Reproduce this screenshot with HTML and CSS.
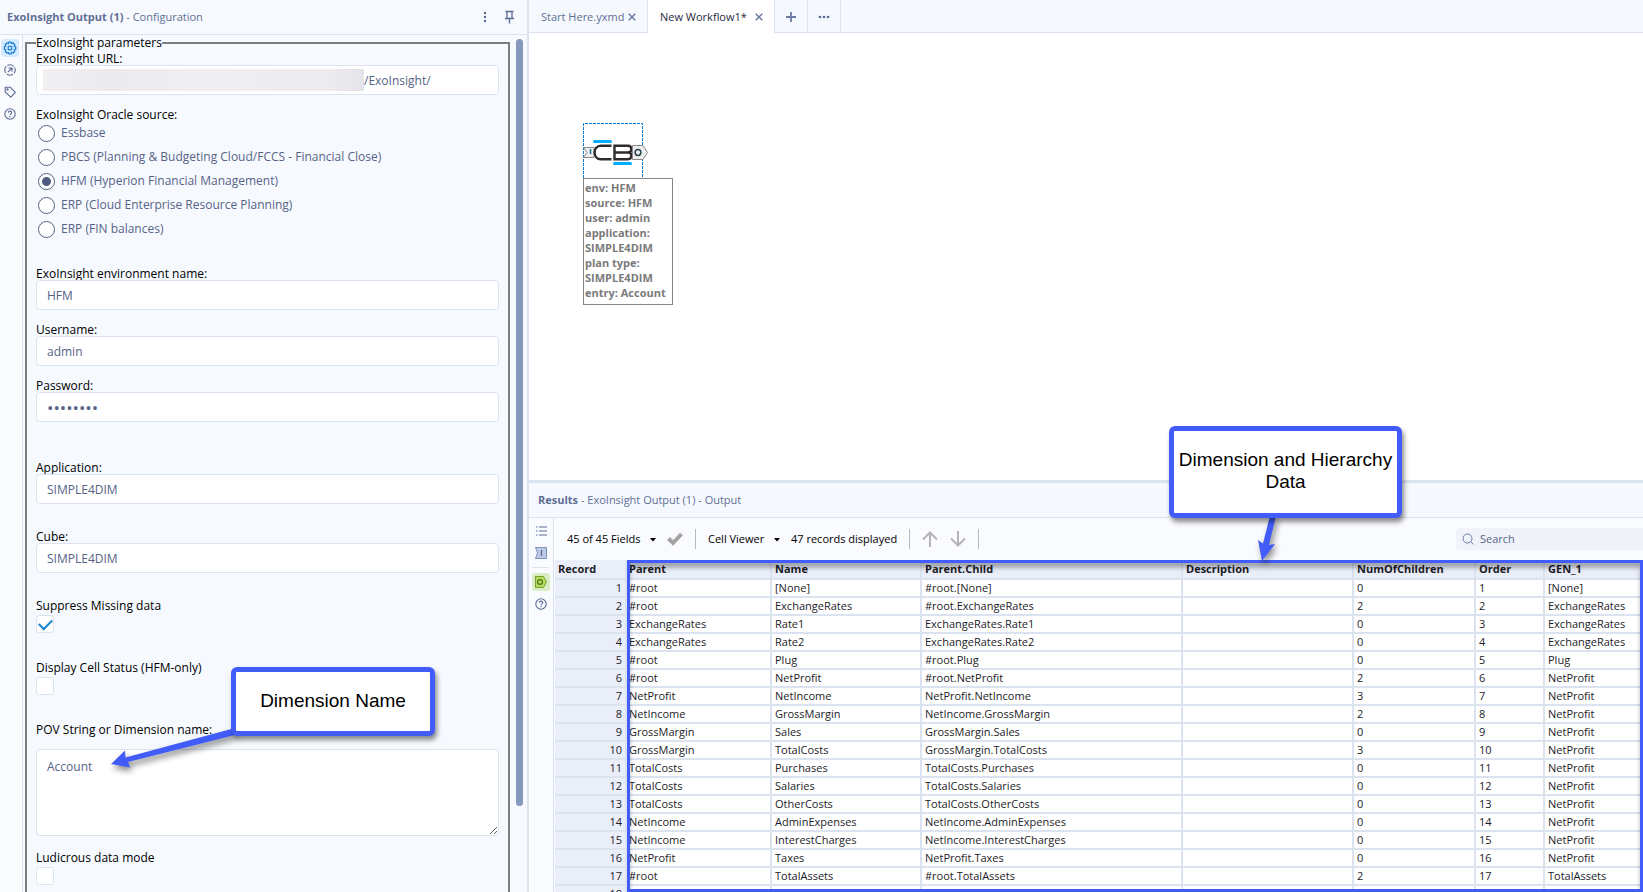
FILE: index.html
```
<!DOCTYPE html>
<html lang="en">
  <head>
    <meta charset="UTF-8">
    <title>ExoInsight Output</title>
    <link rel="stylesheet" href="styles.css">
  </head>
  <body>
    <aside class="config">
      <header class="config-header">
        <h1><b>ExoInsight Output (1)</b> - Configuration</h1>
        <button class="icon-btn" aria-label="More">
          <svg width="16" height="16" viewBox="0 0 16 16" fill="#5a6b94"><circle cx="7" cy="4" r="1.200"/><circle cx="7" cy="8" r="1.200"/><circle cx="7" cy="12" r="1.200"/></svg>
        </button>
        <button class="icon-btn" aria-label="Pin">
          <svg width="16" height="16" viewBox="0 0 16 16" fill="none" stroke="#5a6b94" stroke-width="1.300"><path d="M3.500 2.500h8M5 2.500v7M10 2.500v7M3 9.500h9M7.500 9.500v5"/></svg>
        </button>
      </header>
      <div class="config-main">
        <nav class="rail">
          <button class="rail-btn active" aria-label="Configuration">
            <svg width="14" height="14" viewBox="0 0 14 14" fill="none" stroke="#1b7fd6" stroke-width="1.300"><path d="M5.800 1.200h2.400l.4 1.500 1.500-.7 1.700 1.700-.7 1.500 1.600.6v2.400l-1.600.6.700 1.500-1.700 1.700-1.500-.7-.4 1.500H5.800l-.4-1.500-1.500.7-1.700-1.700.7-1.500-1.600-.6V5.800l1.600-.6-.7-1.500L3.900 2l1.500.7z" stroke-linejoin="round"/><circle cx="7" cy="7" r="1.900"/></svg>
          </button>
          <button class="rail-btn" aria-label="Navigation">
            <svg width="14" height="14" viewBox="0 0 14 14" fill="none" stroke="#5a6b94" stroke-width="1.100"><circle cx="7" cy="7" r="5.200" stroke-dasharray="6.800 1.370" stroke-dashoffset="3.400"/><path d="M4.800 9.200l4-4M5.600 5h3.400v3.400"/></svg>
          </button>
          <button class="rail-btn" aria-label="Annotation">
            <svg width="14" height="14" viewBox="0 0 14 14" fill="none" stroke="#5a6b94" stroke-width="1.100" stroke-linejoin="round"><path d="M2.200 2.200h5L12.300 7.300 7.800 12.200 2.200 7z"/><circle cx="4.500" cy="4.500" r=".6"/></svg>
          </button>
          <button class="rail-btn" aria-label="Help">
            <svg width="14" height="14" viewBox="0 0 14 14" fill="none" stroke="#5a6b94" stroke-width="1.100"><circle cx="7" cy="7" r="5.200"/><path d="M5.400 5.700c0-2.100 3.300-2.100 3.300 0 0 1.200-1.700 1.200-1.700 2.500M7 9v1.200"/></svg>
          </button>
        </nav>
        <form class="params-form">
          <fieldset class="params">
            <legend>ExoInsight parameters</legend>
            <div class="field">
              <label for="url">ExoInsight URL:</label>
              <div class="url-box">
                <input type="text" id="url" class="text url-input" value="/ExoInsight/">
                <span class="url-mask"></span>
              </div>
            </div>
            <div class="field gap-l" role="radiogroup" aria-labelledby="source">
              <span class="caption" id="source">ExoInsight Oracle source:</span>
              <label class="radio"><input type="radio" name="src">Essbase</label>
              <label class="radio"><input type="radio" name="src">PBCS (Planning &amp; Budgeting Cloud/FCCS - Financial Close)</label>
              <label class="radio"><input type="radio" name="src" checked>HFM (Hyperion Financial Management)</label>
              <label class="radio"><input type="radio" name="src">ERP (Cloud Enterprise Resource Planning)</label>
              <label class="radio"><input type="radio" name="src">ERP (FIN balances)</label>
            </div>
            <div class="field">
              <label class="caption" for="env">ExoInsight environment name:</label>
              <input type="text" id="env" class="text" value="HFM">
            </div>
            <div class="field">
              <label class="caption" for="user">Username:</label>
              <input type="text" id="user" class="text" value="admin">
            </div>
            <div class="field gap-xl">
              <label class="caption" for="pass">Password:</label>
              <input type="password" id="pass" class="text" value="password">
            </div>
            <div class="field gap-l">
              <label class="caption" for="app">Application:</label>
              <input type="text" id="app" class="text" value="SIMPLE4DIM">
            </div>
            <div class="field gap-l">
              <label class="caption" for="cube">Cube:</label>
              <input type="text" id="cube" class="text" value="SIMPLE4DIM">
            </div>
            <div class="field check">
              <label class="caption" for="suppress">Suppress Missing data</label>
              <input type="checkbox" id="suppress" checked>
            </div>
            <div class="field check">
              <label class="caption" for="status">Display Cell Status (HFM-only)</label>
              <input type="checkbox" id="status">
            </div>
            <div class="field pov">
              <label class="caption" for="pov">POV String or Dimension name:</label>
              <textarea id="pov">Account</textarea>
            </div>
            <div class="field check">
              <label class="caption" for="ludicrous">Ludicrous data mode</label>
              <input type="checkbox" id="ludicrous">
            </div>
          </fieldset>
          <div class="scroll"><div class="thumb"></div></div>
        </form>
      </div>
    </aside>

    <main class="work">
      <nav class="tabs">
        <div class="tab">
          <a href="#start">Start Here.yxmd</a>
          <button class="close" aria-label="Close"><svg width="8" height="8" viewBox="0 0 8 8" stroke="#6c7ba3" stroke-width="1.500"><path d="M.7.7l6.600 6.600M7.300.7L.7 7.300"/></svg></button>
        </div>
        <div class="tab current">
          <a href="#new">New Workflow1*</a>
          <button class="close" aria-label="Close"><svg width="8" height="8" viewBox="0 0 8 8" stroke="#6c7ba3" stroke-width="1.500"><path d="M.7.7l6.600 6.600M7.300.7L.7 7.300"/></svg></button>
        </div>
        <button class="tab-btn" aria-label="New tab"><svg width="12" height="12" viewBox="0 0 12 12" stroke="#6c7ba3" stroke-width="1.800"><path d="M6 1v10M1 6h10"/></svg></button>
        <button class="tab-btn" aria-label="More tabs"><svg width="12" height="12" viewBox="0 0 12 12" fill="#5a6b94"><circle cx="2" cy="6" r="1.300"/><circle cx="6" cy="6" r="1.300"/><circle cx="10" cy="6" r="1.300"/></svg></button>
      </nav>

      <section class="canvas">
        <div class="node">
          <svg class="node-icon" width="66" height="55" viewBox="0 0 66 55">
            <path d="M.5 55V.5h59V55" fill="none" stroke="#0b78d0" stroke-dasharray="3 1"/>
            <path d="M.5 24.500h10.500v10H.5l3.500-5z" fill="#eee" stroke="#888"/>
            <path d="M7.500 26v5" stroke="#1b6f9a" stroke-width="1.500"/>
            <path d="M11.500 18.500h16M31.500 40.500h16" stroke="#00aeff" stroke-width="3" stroke-linecap="round"/>
            <path d="M28.500 22.800H18c-8.500 0-8.500 13.400 0 13.400h10.500M31.500 22.800h13.500c4.500 0 4.500 6.700 0 6.700 4.500 0 4.500 6.700 0 6.700H31.500zM31.500 29.500h14" fill="none" stroke="#2f2a2c" stroke-width="2.400"/>
            <path d="M49.500 22.500h10.500l4.500 7-4.500 7h-10.500z" fill="#eee" stroke="#888"/>
            <circle cx="55" cy="29.500" r="2.900" fill="none" stroke="#26434f" stroke-width="1.500"/>
          </svg>
          <div class="note">env: HFM<br>source: HFM<br>user: admin<br>application:<br>SIMPLE4DIM<br>plan type:<br>SIMPLE4DIM<br>entry: Account</div>
        </div>
      </section>

      <section class="results">
        <header class="results-header"><b>Results</b> - ExoInsight Output (1) - Output</header>
        <div class="results-main">
          <nav class="results-rail">
            <button class="rail-btn" aria-label="Messages"><svg width="12" height="12" viewBox="0 0 12 12" stroke="#5a6b94" stroke-width="1.200"><path d="M1 2h1.500M4 2h8M1 6h1.500M4 6h8M1 10h1.500M4 10h8"/></svg></button>
            <button class="rail-btn" aria-label="Input"><svg width="14" height="14" viewBox="0 0 14 14"><path d="M1.500 1.500h11v11h-11l2-5.500z" fill="#bccae6" stroke="#7f92bd"/><path d="M7.500 4v6" stroke="#5a6b94" stroke-width="1.300"/></svg></button>
            <hr>
            <button class="rail-btn out" aria-label="Output"><svg width="14" height="14" viewBox="0 0 14 14"><path d="M1.500 1.500h8l3 5.500-3 5.500h-8z" fill="#b5dd5c" stroke="#7a9e2d"/><circle cx="6" cy="7" r="2.400" fill="none" stroke="#4f6d1b" stroke-width="1.200"/></svg></button>
            <button class="rail-btn" aria-label="Help"><svg width="14" height="14" viewBox="0 0 14 14" fill="none" stroke="#5a6b94" stroke-width="1.100"><circle cx="7" cy="7" r="5.200"/><path d="M5.400 5.700c0-2.100 3.300-2.100 3.300 0 0 1.200-1.700 1.200-1.700 2.500M7 9v1.200"/></svg></button>
          </nav>
          <div class="grid-pane">
            <div class="toolbar">
              <select aria-label="Fields"><option>45 of 45 Fields</option></select>
              <svg class="caret" width="6" height="4" viewBox="0 0 6 4"><path d="M0 0h6L3 3.500z"/></svg>
              <button class="apply" aria-label="Apply"><svg width="16" height="14" viewBox="0 0 16 14" fill="none" stroke="#a3a3a3" stroke-width="4"><path d="M1.500 6.500L6 11l8.500-9"/></svg></button>
              <span class="sep"></span>
              <select aria-label="Viewer"><option>Cell Viewer</option></select>
              <svg class="caret" width="6" height="4" viewBox="0 0 6 4"><path d="M0 0h6L3 3.500z"/></svg>
              <span class="count">47 records displayed</span>
              <span class="sep"></span>
              <button class="move" aria-label="Previous"><svg width="16" height="16" viewBox="0 0 16 16" fill="none" stroke="#b4b4b4" stroke-width="2"><path d="M8 16V1.500M1 8.500l7-7 7 7"/></svg></button>
              <button class="move" aria-label="Next"><svg width="16" height="16" viewBox="0 0 16 16" fill="none" stroke="#b4b4b4" stroke-width="2"><path d="M8 0v14.500M1 7.500l7 7 7-7"/></svg></button>
              <span class="sep"></span>
              <label class="search">
                <svg width="12" height="12" viewBox="0 0 12 12" fill="none" stroke="#6c7ba3"><circle cx="5.500" cy="5.500" r="4.500"/><path d="M8.800 8.800l2.700 2.700"/></svg>
                <input type="text" placeholder="Search" aria-label="Search">
              </label>
            </div>
            <div class="table-box">
              <table>
                <colgroup><col class="c-rec"><col class="c-parent"><col class="c-name"><col class="c-child"><col class="c-desc"><col class="c-num"><col class="c-order"><col></colgroup>
                <thead>
                  <tr><th>Record</th><th>Parent</th><th>Name</th><th>Parent.Child</th><th>Description</th><th>NumOfChildren</th><th>Order</th><th>GEN_1</th></tr>
                </thead>
                <tbody>
                  <tr><td>1</td><td>#root</td><td>[None]</td><td>#root.[None]</td><td></td><td>0</td><td>1</td><td>[None]</td></tr>
                  <tr><td>2</td><td>#root</td><td>ExchangeRates</td><td>#root.ExchangeRates</td><td></td><td>2</td><td>2</td><td>ExchangeRates</td></tr>
                  <tr><td>3</td><td>ExchangeRates</td><td>Rate1</td><td>ExchangeRates.Rate1</td><td></td><td>0</td><td>3</td><td>ExchangeRates</td></tr>
                  <tr><td>4</td><td>ExchangeRates</td><td>Rate2</td><td>ExchangeRates.Rate2</td><td></td><td>0</td><td>4</td><td>ExchangeRates</td></tr>
                  <tr><td>5</td><td>#root</td><td>Plug</td><td>#root.Plug</td><td></td><td>0</td><td>5</td><td>Plug</td></tr>
                  <tr><td>6</td><td>#root</td><td>NetProfit</td><td>#root.NetProfit</td><td></td><td>2</td><td>6</td><td>NetProfit</td></tr>
                  <tr><td>7</td><td>NetProfit</td><td>NetIncome</td><td>NetProfit.NetIncome</td><td></td><td>3</td><td>7</td><td>NetProfit</td></tr>
                  <tr><td>8</td><td>NetIncome</td><td>GrossMargin</td><td>NetIncome.GrossMargin</td><td></td><td>2</td><td>8</td><td>NetProfit</td></tr>
                  <tr><td>9</td><td>GrossMargin</td><td>Sales</td><td>GrossMargin.Sales</td><td></td><td>0</td><td>9</td><td>NetProfit</td></tr>
                  <tr><td>10</td><td>GrossMargin</td><td>TotalCosts</td><td>GrossMargin.TotalCosts</td><td></td><td>3</td><td>10</td><td>NetProfit</td></tr>
                  <tr><td>11</td><td>TotalCosts</td><td>Purchases</td><td>TotalCosts.Purchases</td><td></td><td>0</td><td>11</td><td>NetProfit</td></tr>
                  <tr><td>12</td><td>TotalCosts</td><td>Salaries</td><td>TotalCosts.Salaries</td><td></td><td>0</td><td>12</td><td>NetProfit</td></tr>
                  <tr><td>13</td><td>TotalCosts</td><td>OtherCosts</td><td>TotalCosts.OtherCosts</td><td></td><td>0</td><td>13</td><td>NetProfit</td></tr>
                  <tr><td>14</td><td>NetIncome</td><td>AdminExpenses</td><td>NetIncome.AdminExpenses</td><td></td><td>0</td><td>14</td><td>NetProfit</td></tr>
                  <tr><td>15</td><td>NetIncome</td><td>InterestCharges</td><td>NetIncome.InterestCharges</td><td></td><td>0</td><td>15</td><td>NetProfit</td></tr>
                  <tr><td>16</td><td>NetProfit</td><td>Taxes</td><td>NetProfit.Taxes</td><td></td><td>0</td><td>16</td><td>NetProfit</td></tr>
                  <tr><td>17</td><td>#root</td><td>TotalAssets</td><td>#root.TotalAssets</td><td></td><td>2</td><td>17</td><td>TotalAssets</td></tr>
                  <tr><td>18</td><td></td><td></td><td></td><td></td><td></td><td></td><td></td></tr>
                </tbody>
              </table>
              <div class="highlight"></div>
            </div>
          </div>
        </div>
      </section>
    </main>

    <!-- callouts drawn over the app -->
    <svg class="arrow arrow-name" width="130" height="50" viewBox="0 0 130 50"><path d="M0 38l14-13.500.5 7L124 2v7L17 36l2 5.500z" fill="#425cfa"/></svg>
    <div class="callout callout-name">Dimension Name</div>
    <svg class="arrow arrow-data" width="30" height="50" viewBox="0 0 30 50"><path d="M6 45L2 24l5 3.500L14 0h6l-7 29 6-1z" fill="#425cfa"/></svg>
    <div class="callout callout-data">Dimension and Hierarchy Data</div>
  </body>
</html>
```
FILE: styles.css
```
* {
  box-sizing: border-box;
}

body {
  margin: 0;
  height: 100vh;
  display: flex;
  position: relative;
  overflow: hidden;
  font-family: "Open Sans", "Noto Sans", sans-serif;
  font-size: 12px;
  line-height: 16px;
  color: #000;
  background: #fff;
}

button {
  border: none;
  background: none;
  padding: 0;
  display: flex;
  align-items: center;
  justify-content: center;
}

input, select, textarea {
  font: inherit;
  color: #566386;
}

/* configuration panel */
.config {
  flex: 0 0 529px;
  display: flex;
  flex-direction: column;
  background: #f6faff;
  border-right: 2px solid #dbe3f1;
}

.config-header {
  display: flex;
  align-items: center;
  gap: 8px;
  height: 35px;
  flex: none;
  padding: 0 9px 0 7px;
  border-bottom: 1px solid #dbe3f1;
  color: #5f6f94;
}

.config-header h1 {
  flex: 1;
  margin: 0;
  font-size: 11px;
  font-weight: normal;
}

.icon-btn {
  width: 16px;
  height: 16px;
}

.config-main {
  flex: 1;
  min-height: 0;
  display: flex;
}

.rail {
  width: 23px;
  padding: 4px 3px 0 1px;
  display: flex;
  flex-direction: column;
  gap: 4px;
  background: #fafbfe;
  border-right: 1px solid #dbe3f1;
}

.rail-btn {
  width: 18px;
  height: 18px;
  border-radius: 3px;
}

.rail-btn.active {
  background: #d5eaff;
}

.params-form {
  flex: 1;
  display: flex;
  padding: 0 4px 0 2px;
  overflow: hidden;
}

.params {
  flex: 1;
  height: 900px;
  margin: 0;
  padding: 0 9px;
  border: 2px solid #7d7d7d;
}

.params legend {
  padding: 0;
}

.scroll {
  width: 13px;
  padding: 4px 0 0 6px;
}

.thumb {
  width: 7px;
  height: 767px;
  border-radius: 4px;
  background: #8798bd;
}

.field {
  display: flex;
  flex-direction: column;
  margin-bottom: 12px;
}

.field > label:first-child,
.caption {
  height: 14px;
}

.field.gap-l {
  margin-bottom: 25px;
}

.field.gap-xl {
  margin-bottom: 38px;
}

.text {
  width: 100%;
  height: 30px;
  padding: 0 10px;
  border: 1px solid #dbe3f1;
  border-radius: 4px;
  background: #fff;
}

.text[type="password"] {
  font-size: 17px;
}

.url-box {
  position: relative;
}

.url-input {
  padding-left: 327px;
}

.url-mask {
  position: absolute;
  left: 7px;
  top: 4px;
  width: 321px;
  height: 22px;
  background: linear-gradient(90deg, #f0f0f2, #ebebee 20%, #efeff2 50%, #ececef 90%, #e3e3ea);
}

.radio {
  display: flex;
  align-items: center;
  gap: 6px;
  height: 24px;
  padding-left: 2px;
  color: #566386;
}

.radio input {
  appearance: none;
  width: 17px;
  height: 17px;
  margin: 0;
  border: 1px solid #52607f;
  border-radius: 50%;
  background: #fff;
}

.radio input:checked {
  background: radial-gradient(circle, #4d5c80 4px, #fff 5px);
}

.check {
  gap: 3px;
  margin-bottom: 27px;
}

.check input {
  appearance: none;
  width: 18px;
  height: 18px;
  margin: 0;
  border: 1px solid #dbe3f1;
  border-radius: 3px;
  background: #fff;
}

.check input:checked::before {
  content: "";
  display: block;
  width: 11px;
  height: 6px;
  margin: 3px 0 0 2px;
  border-left: 2px solid #1a86d0;
  border-bottom: 2px solid #1a86d0;
  transform: rotate(-45deg);
}

.pov {
  gap: 13px;
  margin-bottom: 14px;
}

.pov textarea {
  height: 87px;
  padding: 9px 10px;
  border: 1px solid #dbe3f1;
  border-radius: 4px;
  background: #fff;
}

/* workflow side */
.work {
  flex: 1;
  min-width: 0;
  display: flex;
  flex-direction: column;
}

.tabs {
  display: flex;
  flex: none;
  height: 33px;
  font-size: 11px;
  background: #f5f8fd;
  box-shadow: inset 0 -1px #dbe3f1;
}

.tab {
  display: flex;
  align-items: center;
  justify-content: space-between;
  width: 119px;
  padding: 0 11px 0 12px;
  border-right: 1px solid #dbe3f1;
  white-space: nowrap;
}

.tab.current {
  width: 127px;
  background: #fff;
}

.tab a {
  color: #5f6f94;
  text-decoration: none;
}

.tab.current a {
  color: #1f2a44;
}

.tab-btn {
  width: 33px;
  border-right: 1px solid #dbe3f1;
}

.canvas {
  flex: 1;
  min-height: 0;
  position: relative;
}

.node {
  position: absolute;
  left: 54px;
  top: 90px;
}

.node-icon {
  display: block;
}

.note {
  width: 90px;
  padding: 1px 1px 4px;
  border: 1px solid #858585;
  font-size: 11px;
  line-height: 15px;
  font-weight: bold;
  color: #7a7a7a;
}

.results {
  flex: 0 0 412px;
  min-height: 0;
  display: flex;
  flex-direction: column;
  border-top: 3px solid #dbe3f1;
  background: #fafbfe;
}

.results-header {
  height: 35px;
  flex: none;
  padding: 9px;
  background: #f5f9fe;
  border-bottom: 1px solid #dbe3f1;
  color: #5f6f94;
  font-size: 11px;
}

.results-main {
  flex: 1;
  min-height: 0;
  display: flex;
}

.results-rail {
  width: 25px;
  padding: 4px 3px;
  display: flex;
  flex-direction: column;
  gap: 4px;
  border-right: 1px solid #dbe3f1;
}

.results-rail hr {
  width: 17px;
  margin: 1px 0;
  border: none;
  border-top: 1px solid #dbe3f1;
}

.rail-btn.out {
  background: #d9edc4;
}

.grid-pane {
  flex: 1;
  min-width: 0;
  display: flex;
  flex-direction: column;
}

.toolbar {
  display: flex;
  align-items: center;
  height: 42px;
  flex: none;
  padding-left: 13px;
  font-size: 11px;
}

.toolbar select {
  appearance: none;
  border: none;
  padding: 0;
  background: none;
  color: #000;
}

.caret {
  margin: 2px 11px 0 9px;
}

.sep {
  width: 1px;
  height: 20px;
  margin: 0 12px;
  background: #b5b9c2;
}

.move + .move {
  margin-left: 12px;
}

.search {
  display: flex;
  align-items: center;
  gap: 6px;
  width: 187px;
  height: 22px;
  margin-left: auto;
  padding-left: 6px;
  border-radius: 4px 0 0 4px;
  background: #f0f4fa;
}

.search input {
  width: 120px;
  border: none;
  padding: 0;
  background: none;
}

.search input::placeholder {
  color: #566386;
}

.table-box {
  flex: 1;
  min-height: 0;
  position: relative;
  overflow: hidden;
  padding-left: 1px;
}

table {
  width: 100%;
  table-layout: fixed;
  border-collapse: separate;
  border-spacing: 0;
  background: #fff;
  color: #1c1c28;
  font-size: 11px;
}

.c-rec { width: 72px; }
.c-parent { width: 145px; }
.c-name { width: 150px; }
.c-child { width: 261px; }
.c-desc { width: 171px; }
.c-num { width: 122px; }
.c-order { width: 69px; }

th, td {
  height: 18px;
  padding: 0 3px;
  border-right: 2px solid #dbe3f1;
  border-bottom: 2px solid #dbe3f1;
  text-align: left;
  white-space: nowrap;
}

th {
  height: 20px;
  background: #eaeef9;
}

td:nth-child(2), th:nth-child(2) {
  padding-left: 2px;
}

td:first-child {
  background: #eaeef9;
  text-align: right;
}

.highlight {
  position: absolute;
  left: 73px;
  right: 0;
  top: 0;
  bottom: 0;
  border: 3px solid #425cfa;
  box-shadow: inset 0 5px 4px rgba(0, 0, 0, 0.3);
}

/* callouts */
.callout {
  position: absolute;
  display: flex;
  align-items: center;
  justify-content: center;
  padding: 3px 4px 5px;
  border: 5px solid #425cfa;
  border-radius: 6px;
  background: #fff;
  box-shadow: 2px 4px 5px rgba(0, 0, 0, 0.45);
  font-family: "Liberation Sans", Arial, sans-serif;
  font-size: 19px;
  line-height: 22px;
  text-align: center;
}

.callout-name {
  left: 231px;
  top: 667px;
  width: 204px;
  height: 69px;
}

.callout-data {
  left: 1169px;
  top: 426px;
  width: 233px;
  height: 92px;
}

.arrow {
  position: absolute;
  filter: drop-shadow(2px 4px 3px rgba(0, 0, 0, 0.45));
}

.arrow-name {
  left: 111px;
  top: 726px;
}

.arrow-data {
  left: 1256px;
  top: 516px;
}
```
